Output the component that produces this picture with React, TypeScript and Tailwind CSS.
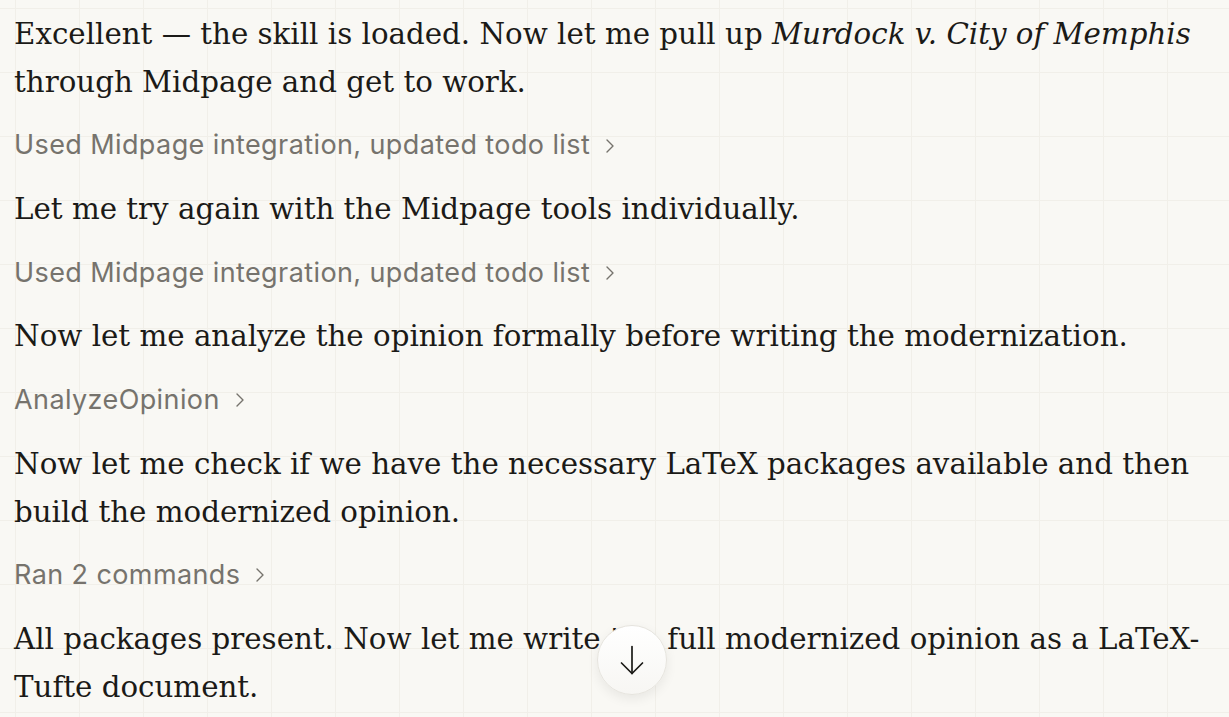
import React from 'react';
import { ChevronRight } from 'lucide-react';

const serif = "font-['DejaVu_Serif',serif]";
const sans = "font-['Inter',sans-serif]";

const ToolRow = ({ label }: { label: string }) => (
  <div className={`${sans} flex items-center h-[32px] text-[27px] text-[#76736d] tracking-[0.4px]`}>
    <span>{label}</span>
    <ChevronRight className="ml-[8px] h-[24px] w-[24px]" strokeWidth={1.4} />
  </div>
);

const Para = ({ children }: { children: React.ReactNode }) => (
  <p className={`${serif} text-[29.3px] leading-[48px] text-[#1b1a17]`}>{children}</p>
);

export default function App() {
  return (
    <div className="relative h-[717px] w-[1229px] overflow-hidden bg-[#f9f8f4] bg-[linear-gradient(to_right,#f1efe9_1px,transparent_1px),linear-gradient(to_bottom,#f1efe9_1px,transparent_1px)] bg-[size:64px_64px] bg-[position:15px_8px]">
      <div className="flex w-[1214px] flex-col gap-[23.6px] pl-[14px] pt-[10px]">
        <Para>
          Excellent — the skill is loaded. Now let me pull up <em>Murdock v. City of Memphis</em> through Midpage and get to work.
        </Para>
        <ToolRow label="Used Midpage integration, updated todo list" />
        <Para>Let me try again with the Midpage tools individually.</Para>
        <ToolRow label="Used Midpage integration, updated todo list" />
        <Para>Now let me analyze the opinion formally before writing the modernization.</Para>
        <ToolRow label="AnalyzeOpinion" />
        <Para>Now let me check if we have the necessary LaTeX packages available and then build the modernized opinion.</Para>
        <ToolRow label="Ran 2 commands" />
        <Para>All packages present. Now let me write the full modernized opinion as a LaTeX-Tufte document.</Para>
      </div>
      <button className="absolute left-[597px] top-[625px] flex h-[70px] w-[70px] items-center justify-center rounded-full border border-[#e6e4de] bg-[linear-gradient(to_bottom,#ffffff,#f7f6f3)] shadow-[0_4px_12px_rgba(0,0,0,0.07)]">
        <svg width="30" height="30" viewBox="0 0 30 30" fill="none" stroke="#1b1a17" strokeWidth="1.7" strokeLinecap="round" strokeLinejoin="round">
          <path d="M15 1.5v27" />
          <path d="M4.5 18l10.5 10.5L25.5 18" />
        </svg>
      </button>
    </div>
  );
}
